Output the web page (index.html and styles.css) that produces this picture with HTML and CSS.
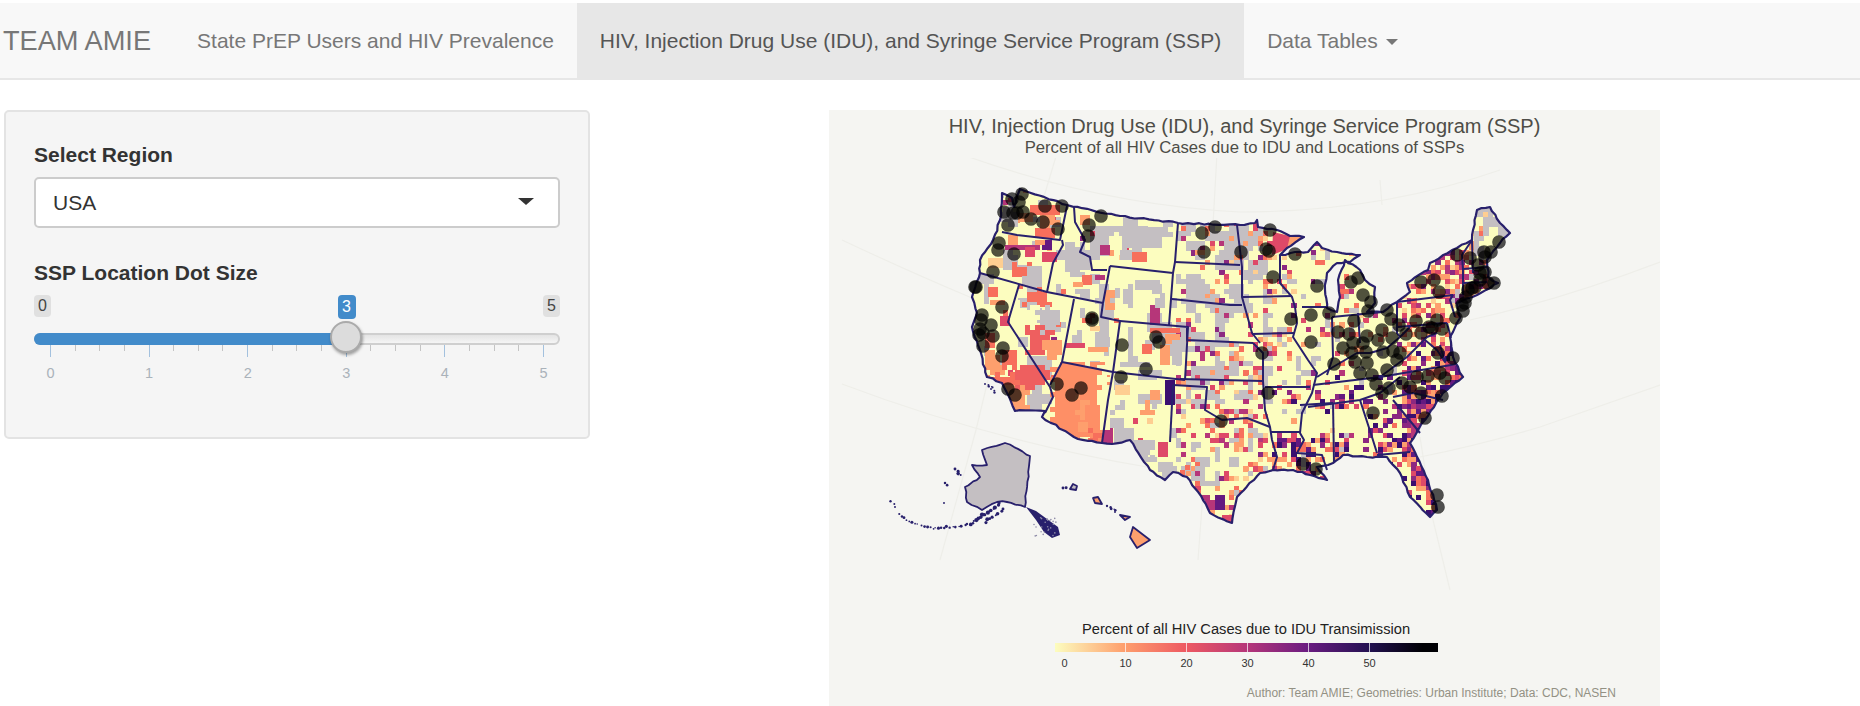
FILE: index.html
```html
<!DOCTYPE html>
<html lang="en">
<head>
  <meta charset="UTF-8">
  <title>TEAM AMIE</title>
  <link rel="stylesheet" href="styles.css">
</head>
<body>

  <nav class="navbar">
    <span class="brand">TEAM AMIE</span>
    <a class="tab">State PrEP Users and HIV Prevalence</a>
    <a class="tab active">HIV, Injection Drug Use (IDU), and Syringe Service Program (SSP)</a>
    <a class="tab">Data Tables <span class="caret"></span></a>
  </nav>

  <div class="main">
    <aside class="well">
      <label class="field-label">Select Region</label>
      <div class="select">
        <span>USA</span>
        <span class="select-arrow"></span>
      </div>

      <label class="field-label second">SSP Location Dot Size</label>
      <div class="slider">
        <div class="slider-labels">
          <span class="bubble">0</span>
          <span class="bubble value" style="left: 60%">3</span>
          <span class="bubble">5</span>
        </div>
        <div class="track">
          <div class="track-fill" style="width: 60%"></div>
          <div class="handle" style="left: 60%"></div>
        </div>
        <div class="ticks" id="ticks"></div>
        <div class="tick-labels">
          <span>0</span><span>1</span><span>2</span><span>3</span><span>4</span><span>5</span>
        </div>
      </div>
    </aside>

    <section class="plot">
      <div class="plot-title">HIV, Injection Drug Use (IDU), and Syringe Service Program (SSP)</div>
      <div class="plot-subtitle">Percent of all HIV Cases due to IDU and Locations of SSPs</div>
      <svg class="map" id="map" viewBox="829 158 831 462" width="831" height="462" xmlns="http://www.w3.org/2000/svg"></svg>
      <div class="legend">
        <div class="legend-title">Percent of all HIV Cases due to IDU Transimission</div>
        <div class="legend-bar">
          <i></i><i></i><i></i><i></i><i></i>
        </div>
        <div class="legend-labels">
          <span>0</span><span>10</span><span>20</span><span>30</span><span>40</span><span>50</span>
        </div>
      </div>
      <div class="caption">Author: Team AMIE; Geometries: Urban Institute; Data: CDC, NASEN</div>
    </section>
  </div>

  <script src="map.js"></script>
</body>
</html>
```

FILE: styles.css
```css
* { box-sizing: border-box; }
body { margin: 0; padding-top: 3px; font-family: "Liberation Sans", Arial, sans-serif; color: #333; background: white; }

.navbar { display: flex; align-items: stretch; height: 77px; background: #f8f8f8; border-bottom: 2px solid #e7e7e7; }
.brand { display: flex; align-items: center; padding: 0 23px 0 3px; font-size: 27.2px; color: #777; }
.tab { display: flex; align-items: center; padding: 0 23px; font-size: 21px; color: #777; }
.tab.active { background: #e7e7e7; color: #555; }
.caret { display: inline-block; margin-left: 8px; margin-top: 3px; border-top: 6px solid #777; border-left: 6px solid transparent; border-right: 6px solid transparent; }

.main { display: flex; align-items: flex-start; padding: 30px 0 0 4px; }

.well { flex: none; width: 586px; height: 329px; padding: 31px 28px 0 28px; background: #f5f5f5; border: 2px solid #e3e3e3; border-radius: 5px; }
.field-label { display: block; font-size: 21px; font-weight: bold; line-height: 24px; color: #333; }
.field-label.second { margin-top: 33px; }

.select { display: flex; align-items: center; justify-content: space-between; height: 51px; margin-top: 10px; padding: 0 24px 0 17px; background: white; border: 2px solid #ccc; border-radius: 5px; font-size: 21px; }
.select-arrow { border-top: 7px solid #333; border-left: 8px solid transparent; border-right: 8px solid transparent; margin-bottom: 3px; }

.slider { margin-top: 10px; }
.slider-labels { position: relative; display: flex; justify-content: space-between; height: 26px; }
.bubble { height: 22px; padding: 0 4px; background: #e0e0e0; border-radius: 4px; font-size: 16px; line-height: 22px; color: #444; }
.bubble.value { position: absolute; top: 0; height: 24px; margin-left: -12px; padding: 0 4.5px; background: #428bca; color: white; line-height: 24px; }
.track { position: relative; height: 12px; margin-top: 12px; background: linear-gradient(#e4e4e4, #f5f5f5); border: 2px solid #cfcfcf; border-radius: 6px; }
.track-fill { height: 12px; margin: -2px 0 0 -2px; background: #428bca; border-radius: 6px 0 0 6px; }
.handle { position: absolute; top: -14px; width: 32px; height: 32px; margin-left: -19px; background: #dcdcdc; border: 2px solid #aaa; border-radius: 50%; box-shadow: 1px 2px 3px rgba(0,0,0,.35); }
.ticks { display: flex; justify-content: space-between; align-items: flex-start; height: 12px; padding: 0 16px; }
.ticks i { width: 1px; height: 6px; background: #c4c4c4; }
.ticks i.major { height: 12px; background: #a3c1de; }
.tick-labels { display: flex; justify-content: space-between; margin-top: 8px; padding: 0 16px; font-size: 14.5px; line-height: 16px; color: #aab2ba; }
.tick-labels span { display: flex; justify-content: center; width: 1px; }

.plot { flex: none; display: flex; flex-direction: column; width: 831px; height: 596px; margin-left: 239px; background: #f5f5f2; overflow: hidden; color: #4e4d47; }
.plot-title { margin-top: 5px; font-size: 20px; line-height: 23px; text-align: center; }
.plot-subtitle { font-size: 16.7px; line-height: 19px; text-align: center; }
.map { display: block; flex: none; margin-top: 1px; }
.legend { flex: none; width: 383px; margin-left: 225.5px; }
.legend-title { margin-top: 1px; font-size: 14.7px; line-height: 16px; text-align: center; color: #222; white-space: nowrap; }
.legend-bar { display: flex; height: 9px; margin-top: 6px; padding-left: 70.5px; gap: 60px; background: linear-gradient(to right, #fcfdbf, #fe9f6d 18%, #ee5a62 34%, #b63679 50%, #6a1c81 66%, #231151 82%, #000004 96%); }
.legend-bar i { width: 1px; background: rgba(255,255,255,.7); }
.legend-labels { display: flex; gap: 60px; margin-top: 5px; padding-left: 9.5px; font-size: 11px; line-height: 12px; color: #333; }
.legend-labels span { display: flex; justify-content: center; width: 1px; }
.caption { margin: 17px 44px 0 0; font-size: 12px; line-height: 14px; color: #939184; text-align: right; }
```

FILE: map.js
```js
// slider ticks
var tickBox = document.getElementById("ticks");
for (var t = 0; t <= 20; t++) {
  var tick = document.createElement("i");
  if (t % 4 === 0) tick.className = "major";
  tickBox.appendChild(tick);
}

// map is drawn in page coordinates, the viewBox takes care of the offset
var NS = "http://www.w3.org/2000/svg";
var svg = document.getElementById("map");

function el(name, attrs, parent) {
  var e = document.createElementNS(NS, name);
  for (var k in attrs) e.setAttribute(k, attrs[k]);
  (parent || svg).appendChild(e);
  return e;
}

var NAVY = "#28206c";
var YELLOW = "#fcfdbf", LIGHT = "#fece91", ORANGE = "#fe9f6d", RED = "#f76f5c", ROSE = "#de4968";
var MAGENTA = "#b63679", PLUM = "#8c2981", PURPLE = "#641a80", DARK = "#3b0f70", GREY = "#c4bfc2";

// graticule
var graticule = [
  "M958 153 Q1100 205 1240 212 Q1380 212 1500 170",
  "M842 240 Q910 272 972 298",
  "M842 384 Q990 440 1147 467",
  "M1420 457 Q1480 445 1540 427 L1660 385",
  "M1470 320 Q1560 300 1660 262",
  "M1057 153 L1043 200",
  "M1217 153 L1213 225",
  "M1380 180 L1382 205",
  "M988 380 L976 430 L940 560",
  "M1203 493 L1198 560",
  "M1420 437 L1433 520 L1450 590"
];
graticule.forEach(function (d) {
  el("path", { d: d, fill: "none", stroke: "#eeeee9", "stroke-width": 1.2 });
});

// seeded so every render gives the same counties
function hash(x, y) {
  var s = Math.sin(x * 127.1 + y * 311.7) * 43758.5453;
  return s - Math.floor(s);
}
function noise(x, y) {
  var ix = Math.floor(x), iy = Math.floor(y), fx = x - ix, fy = y - iy;
  var a = hash(ix, iy), b = hash(ix + 1, iy), c = hash(ix, iy + 1), d = hash(ix + 1, iy + 1);
  fx = fx * fx * (3 - 2 * fx);
  fy = fy * fy * (3 - 2 * fy);
  return a + (b - a) * fx + (c - a) * fy + (d - c - b + a) * fx * fy;
}

// breaks a coast into short wobbly pieces
function roughen(points, amount) {
  var pts = points.split(" ").map(function (p) { return p.split(",").map(Number); });
  var out = [];
  pts.forEach(function (p, i) {
    var q = pts[(i + 1) % pts.length];
    var n = Math.max(1, Math.round(Math.hypot(q[0] - p[0], q[1] - p[1]) / 5));
    for (var j = 0; j < n; j++) {
      var px = p[0] + (q[0] - p[0]) * j / n, py = p[1] + (q[1] - p[1]) * j / n;
      var ox = j ? (hash(px, py) - 0.5) * amount : 0, oy = j ? (hash(py, px) - 0.5) * amount : 0;
      out.push((px + ox).toFixed(1) + "," + (py + oy).toFixed(1));
    }
  });
  return out.join(" ");
}

var outline = roughen("1002,193 1012,198 1014,207 1020,189 1067,205 1120,216 1178,223 1240,225 1255,223 1257,220 1258,227 1277,230 1290,236 1304,237 1287,248 1280,255 1295,252 1308,252 1317,242 1322,248 1337,252 1360,255 1350,262 1337,263 1327,273 1325,290 1327,308 1337,312 1340,297 1338,280 1345,260 1360,270 1365,280 1375,287 1375,303 1367,312 1383,312 1397,302 1410,292 1407,283 1428,270 1430,263 1457,248 1472,240 1477,210 1490,207 1500,223 1510,233 1500,243 1487,260 1488,277 1498,283 1490,288 1477,295 1457,303 1460,318 1450,337 1453,357 1463,377 1443,393 1425,420 1410,443 1428,480 1437,510 1430,517 1410,497 1400,473 1387,457 1367,457 1343,455 1333,463 1317,467 1327,480 1310,475 1293,470 1273,470 1260,473 1237,497 1232,523 1210,513 1203,500 1187,477 1173,472 1165,480 1150,470 1130,440 1112,444 1102,443 1078,439 1042,417 1045,411 1015,411 1002,383 987,377 980,350 972,327 977,313 972,297 980,273 980,260 993,240 1000,220", 1.6);
var alaska = roughen("1030,456 1005,443 982,450 987,465 972,465 980,477 965,487 967,502 982,510 997,502 1007,502 1025,507", 1.6);
var hawaii = ["1133,527 1150,540 1137,548 1130,537", "1120,515 1130,517 1125,520", "1093,498 1098,497 1102,504 1095,503", "1073,484 1077,486 1076,490 1070,489"];

var defs = el("defs", {});
var clip = el("clipPath", { id: "usClip" }, defs);
el("polygon", { points: outline }, clip);
el("polygon", { points: alaska }, clip);
hawaii.forEach(function (p) { el("polygon", { points: p }, clip); });

var fills = el("g", { "clip-path": "url(#usClip)" });
el("rect", { x: 829, y: 158, width: 831, height: 462, fill: YELLOW }, fills);

var warm = [RED, RED, LIGHT, ORANGE, ORANGE, ROSE, ROSE, MAGENTA, PLUM];
var hot = [ORANGE, ORANGE, RED, ROSE, ROSE, MAGENTA, PLUM, PURPLE, PURPLE, DARK, DARK];

function region(x, y) {
  if (x < 1175) return { grey: 0.7, p: 0.02, colors: warm, s: 12 };
  if (y < 345 && x < 1250) return { grey: 0.5, p: 0.11, colors: warm, s: 9 };
  if (x < 1270) return { grey: y > 400 ? 0.68 : 0.6, p: 0.2, colors: warm, s: 8 };
  if (x < 1320 && y < 385) return { grey: 0.78, p: 0.14, colors: warm, s: 7 };
  if (x < 1400 && y < 375) return { grey: 0.82, p: 0.12, colors: warm, s: 7 };
  if (x < 1395 && y < 410) return { grey: 0.85, p: 0.24, colors: hot, s: 7 };
  if (x < 1345 && y > 430) return { grey: 0.72, p: 0.5, colors: hot, s: 7 };
  if (x < 1360 && y > 400) return { grey: 1, p: 0.02, colors: warm, s: 7 };
  if (x > 1470 && y < 260) return { grey: 0.72, p: 0.02, colors: warm, s: 10 };
  if (y < 340) return { grey: 0.85, p: 0.5, colors: warm, s: 7 };
  if (x < 1400 && y < 455) return { grey: 1, p: 0.45, colors: hot, s: 7 };
  if (x > 1395 && y >= 385 && y < 455) return { grey: 1, p: 0.95, colors: hot, s: 7 };
  // florida is hot on the coasts, paler inland
  if (y >= 455) return { grey: 1, p: Math.abs(x - (1392 + (y - 455) * 0.6)) < 8 ? 0.35 : 0.95, colors: hot, s: 7 };
  return { grey: 0.9, p: 0.6, colors: hot, s: 7 };
}

var size = 4.8;
for (var y = 188; y < 530; y += size) {
  for (var x = 965; x < 1515; x += size) {
    var r = region(x, y);
    var color = null;
    var h = hash(x * 1.3, y * 0.7);
    if (h < r.p) color = r.colors[Math.floor(hash(y, x) * r.colors.length)];
    else if (noise(x / r.s, y / r.s) > r.grey) color = GREY;
    if (color) el("rect", { x: x, y: y, width: size + 0.3, height: size + 0.3, fill: color, "shape-rendering": "crispEdges" }, fills);
  }
}

// the large western counties and other patches that stand out
var patches = [
  [1030,205,30,12,RED],[1040,215,22,14,ORANGE],[1018,213,14,8,ORANGE],[1003,200,7,5,MAGENTA],[1038,200,12,6,GREY],
  [1020,222,22,12,YELLOW],[1035,228,20,9,RED],
  [1008,235,9,8,ORANGE],[1005,245,34,6,MAGENTA],[1025,247,8,8,ROSE],[1042,240,10,12,PURPLE],[1042,252,16,10,ROSE],[988,258,16,12,LIGHT],[1012,262,18,22,RED],[1022,266,20,22,GREY],[1035,240,12,6,ORANGE],
  [988,287,9,10,RED],[990,300,14,7,ORANGE],[1003,310,6,12,RED],[1000,316,12,8,ROSE],[985,333,8,14,RED],
  [985,350,22,30,ORANGE],[990,372,30,40,RED],[1002,350,16,22,RED],[1000,385,30,30,ORANGE],[1015,365,34,24,"#ee5f5f"],
  [1022,287,28,18,RED],[1010,300,12,24,YELLOW],[1025,325,30,30,"#ee5f5f"],[1042,340,20,22,ORANGE],[1040,305,22,30,GREY],[1025,305,14,22,YELLOW],
  [1050,362,62,80,"#fe8f66"],[1097,365,16,38,YELLOW],[1075,395,14,25,ORANGE],[1088,428,18,14,RED],[1103,428,8,16,MAGENTA],[1078,422,10,10,ORANGE],[1100,400,8,28,YELLOW],
  [1067,330,18,14,GREY],[1095,337,15,12,GREY],[1065,343,18,6,ROSE],[1088,347,20,6,ORANGE],[1082,318,8,6,RED],[1090,326,10,6,LIGHT],
  [1135,280,25,10,GREY],[1105,290,9,20,ORANGE],[1110,283,14,20,GREY],[1150,305,10,22,MAGENTA],[1155,293,16,14,GREY],
  [1122,228,42,25,GREY],[1148,222,25,14,GREY],[1120,250,14,12,GREY],[1100,245,8,8,MAGENTA],[1132,252,14,10,RED],[1080,215,10,10,ORANGE],
  [1065,242,22,36,GREY],[1082,275,10,10,RED],[1095,275,9,6,MAGENTA],[1073,282,8,5,ORANGE],
  [1150,328,32,6,RED],[1165,334,14,8,ORANGE],[1160,345,12,22,ORANGE],[1172,340,12,24,GREY],[1145,340,10,10,GREY],[1142,344,10,10,RED],[1120,362,30,6,GREY],
  [1165,380,12,25,DARK],[1110,400,13,16,GREY],[1140,400,15,16,ORANGE],[1150,390,12,10,ORANGE],[1124,428,12,14,GREY],[1115,385,16,10,LIGHT],
  [1130,440,24,22,GREY],[1158,442,10,14,ROSE],[1158,462,14,12,GREY],[1175,465,14,16,RED],
  [1200,495,14,16,MAGENTA],[1215,495,8,14,PURPLE],[1222,515,10,10,ROSE]
];
// each patch is built from county sized cells, its edge cells drop out at random
patches.forEach(function (p) {
  var c = 5;
  var nx = Math.max(1, Math.round(p[2] / c)), ny = Math.max(1, Math.round(p[3] / c));
  for (var i = 0; i < nx; i++) {
    for (var j = 0; j < ny; j++) {
      var edge = i === 0 || j === 0 || i === nx - 1 || j === ny - 1;
      if (edge && nx > 2 && ny > 2 && hash(p[0] + i, p[1] + j) < 0.4) continue;
      el("rect", { x: p[0] + i * c, y: p[1] + j * c, width: c + 0.3, height: c + 0.3, fill: p[4], "shape-rendering": "crispEdges" }, fills);
    }
  }
});
// minnesota arrowhead
el("polygon", { points: "1273,232 1290,236 1304,237 1285,250 1272,255", fill: ROSE }, fills);
el("polygon", { points: "1290,236 1304,237 1287,249", fill: ORANGE }, fills);
// alaska and hawaii have flat colours
el("polygon", { points: alaska, fill: GREY }, fills);
el("polygon", { points: hawaii[0], fill: ORANGE }, fills);
el("polygon", { points: hawaii[1], fill: ORANGE }, fills);
el("polygon", { points: hawaii[2], fill: ORANGE }, fills);
el("polygon", { points: hawaii[3], fill: GREY }, fills);

// state borders
var borders = [
  "1002,232 1017,235 1060,240 1067,206",
  "1062,240 1063,245 1053,263 1047,292",
  "980,273 1047,292 1103,303",
  "1019,285 1008,322 1050,387 1053,397 1045,413",
  "1074,299 1062,362 1050,385",
  "1062,362 1113,372 1185,380",
  "1103,303 1101,317 1120,321 1113,372 1108,400 1102,443",
  "1074,207 1075,222 1085,240 1080,252 1090,257 1092,270 1107,270",
  "1110,266 1173,273 1169,325",
  "1110,266 1103,303",
  "1120,321 1188,327 1185,380",
  "1173,385 1170,442",
  "1178,223 1175,262 1173,273",
  "1175,262 1240,265",
  "1172,299 1230,305 1242,305",
  "1187,328 1187,340 1253,343",
  "1180,379 1262,381",
  "1173,385 1207,387 1205,410 1222,420 1247,418 1270,427",
  "1253,343 1263,353 1263,381 1265,410 1270,427 1272,440 1277,457 1273,470",
  "1270,432 1300,432",
  "1265,387 1310,387",
  "1280,255 1280,283 1292,297 1295,307 1297,323 1293,337 1308,360 1317,373 1312,393 1302,413 1300,433 1304,440 1297,453 1322,455 1327,470",
  "1237,225 1242,267 1242,297 1252,333 1260,343",
  "1243,297 1292,296",
  "1252,334 1295,333",
  "1302,307 1327,307",
  "1332,317 1333,357 1327,375",
  "1358,313 1360,343",
  "1332,317 1383,312",
  "1317,377 1333,367 1357,353 1370,353 1387,348 1400,337",
  "1397,303 1397,333 1400,337 1410,327",
  "1397,327 1447,323",
  "1313,385 1380,377 1457,364",
  "1380,377 1407,357 1427,337 1437,333",
  "1308,407 1360,400 1380,393 1400,377",
  "1393,397 1413,393 1443,400",
  "1393,400 1420,433",
  "1360,400 1372,437 1377,453",
  "1377,455 1410,452",
  "1333,403 1334,462",
  "1300,405 1333,403",
  "1397,302 1453,295",
  "1463,270 1462,255 1472,240 1473,273",
  "1463,269 1488,267",
  "1463,283 1487,282",
  "1463,269 1463,295",
  "1453,295 1450,300 1455,317",
  "1447,323 1451,338",
  "1440,345 1445,362 1452,350",
  "1425,340 1437,350 1445,362"
];
borders.forEach(function (b) {
  el("polyline", { points: b, fill: "none", stroke: NAVY, "stroke-width": 2, "stroke-linejoin": "round" });
});
el("polygon", { points: outline, fill: "none", stroke: NAVY, "stroke-width": 2.2, "stroke-linejoin": "round" });
el("polygon", { points: alaska, fill: "none", stroke: NAVY, "stroke-width": 1.8, "stroke-linejoin": "round" });
hawaii.forEach(function (p) {
  el("polygon", { points: p, fill: "none", stroke: NAVY, "stroke-width": 1.8, "stroke-linejoin": "round" });
});

// alaska panhandle: a dark knot of islands with small gaps of sea
el("polygon", { points: "1026,507 1036,511 1047,519 1058,527 1060,535 1052,538 1044,532 1036,520", fill: NAVY });
for (var s = 0; s < 26; s++) {
  el("circle", { cx: 1034 + hash(s, 3) * 22, cy: 514 + hash(s, 7) * 22, r: 0.8, fill: "#8f8ca8" });
}

// peninsula and aleutians, small blobs along a line
function chain(points, step, size) {
  for (var i = 0; i < points.length - 1; i++) {
    var a = points[i], b = points[i + 1];
    var n = Math.round(Math.hypot(b[0] - a[0], b[1] - a[1]) / step);
    for (var j = 0; j < n; j++) {
      var cx = a[0] + (b[0] - a[0]) * j / n + (hash(i, j) - 0.5) * 2;
      var cy = a[1] + (b[1] - a[1]) * j / n + (hash(j, i) - 0.5) * 2;
      el("circle", { cx: cx, cy: cy, r: size * (0.6 + hash(i + 5, j) * 0.7), fill: NAVY });
    }
  }
}
chain([[1000,504], [985,514], [968,525]], 2.5, 1.7);
chain([[1004,510], [990,518], [984,524]], 3, 1.5);
chain([[968,525], [950,527], [930,528], [906,520], [897,512]], 3, 1.2);
chain([[896,508], [889,497]], 4, 1);
chain([[956,470], [962,476]], 2, 1.5);
chain([[945,504], [945,509]], 5, 1);
chain([[946,484], [947,487]], 2, 1.3);
chain([[1064,489], [1067,487]], 2, 1.5);
chain([[1108,507], [1118,510]], 2, 1.2);
chain([[1116,513], [1118,515]], 2, 1);
chain([[986,385], [995,387]], 2, 1);
chain([[992,390], [997,393]], 2, 1);

// syringe service program locations
var dots = [
  [1022,194],[1012,199],[1019,202],[1023,212],[1017,213],[1004,212],[1013,213],[1031,219],[1045,206],[1062,206],[1043,222],[1058,229],[1008,225],[1101,216],[1089,225],[1088,236],
  [999,243],[998,250],[1014,254],[993,272],[975,287],[976,287],[1002,307],[982,315],[981,320],[991,325],[980,329],[979,335],[983,333],[993,336],[983,346],[1003,348],[1002,356],[1092,318],[1092,320],
  [1122,345],[1156,337],[1159,342],[1146,369],[1121,377],[1057,384],[1081,388],[1072,395],[1008,389],[1015,395],
  [1215,227],[1202,233],[1204,252],[1241,252],[1270,230],[1266,249],[1269,251],[1295,254],[1273,277],[1317,286],[1291,319],[1311,315],[1329,313],[1311,342],[1262,353],[1268,393],[1221,421],[1303,464],[1316,469],
  [1351,282],[1358,278],[1363,295],[1371,302],[1368,311],[1354,321],[1387,310],[1391,319],[1399,325],[1382,330],[1338,332],[1349,334],[1367,336],[1378,340],[1392,338],[1406,334],[1421,333],[1429,327],[1437,320],[1442,329],[1432,328],[1416,321],[1439,292],[1434,280],[1421,282],
  [1456,318],[1463,311],[1462,305],[1466,297],[1472,288],[1475,287],[1480,273],[1485,272],[1470,258],[1457,255],[1484,252],[1491,252],[1485,257],[1499,242],[1494,283],[1488,283],
  [1343,348],[1352,353],[1366,352],[1383,352],[1393,351],[1400,353],[1397,360],[1355,362],[1367,363],[1387,370],[1360,373],[1372,375],[1376,384],[1334,364],[1389,388],[1382,393],[1402,383],[1410,387],[1417,377],[1428,376],[1440,373],[1445,378],[1421,393],[1442,396],[1373,413],[1425,418],[1438,353],[1453,358],[1437,495],[1438,507],[1353,343],[1363,343],[1465,303],[1468,290],[1480,280],[1478,265]
];
dots.forEach(function (d) {
  el("circle", { cx: d[0], cy: d[1], r: 6.6, fill: "#000", "fill-opacity": 0.68, stroke: "#000", "stroke-opacity": 0.3, "stroke-width": 0.8 });
});
```
